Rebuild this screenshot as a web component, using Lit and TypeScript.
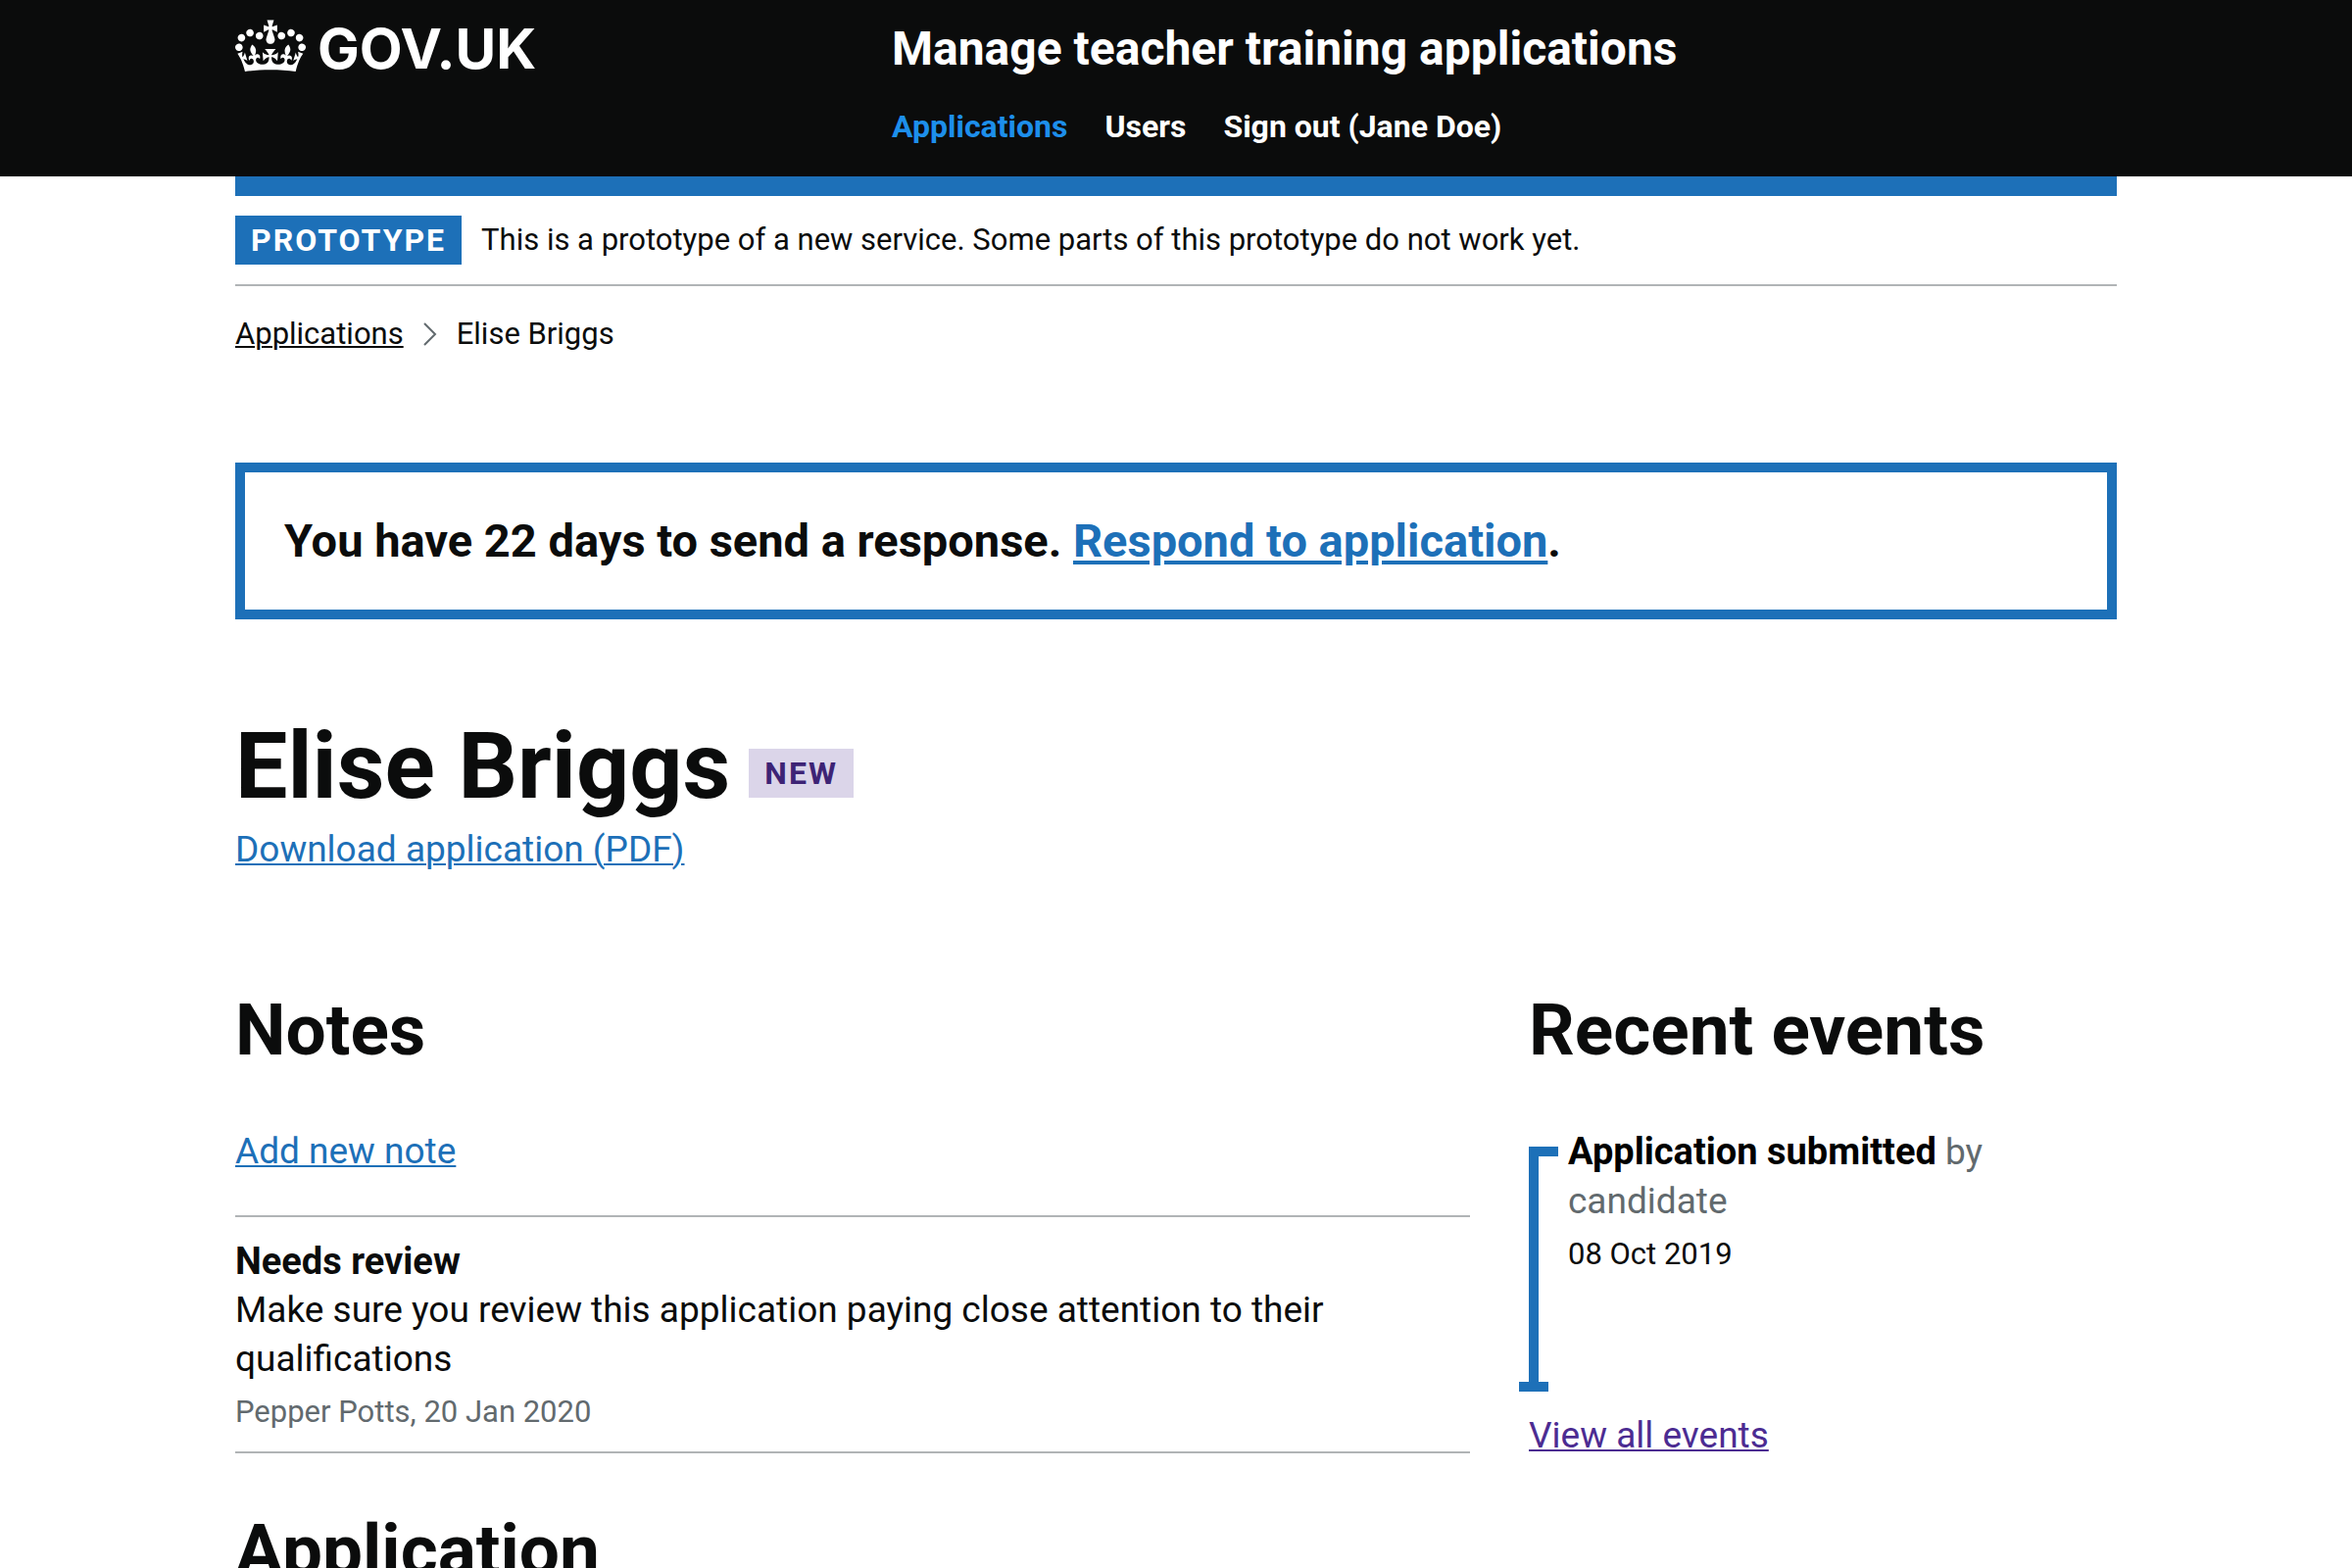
import { LitElement, html, css } from "lit";
import { customElement, property } from "lit/decorators.js";

interface NavItem {
  label: string;
  href: string;
  current?: boolean;
}

interface TimelineEvent {
  title: string;
  actor: string;
  date: string;
}

interface Note {
  title: string;
  body: string;
  author: string;
  date: string;
}

/* Black service header with the crown logotype and primary navigation. */
@customElement("service-header")
export class ServiceHeader extends LitElement {
  @property({ attribute: false }) items: NavItem[] = [];

  static styles = css`
    :host {
      display: block;
      background: #0b0c0c;
      color: #ffffff;
    }
    .inner {
      display: grid;
      grid-template-columns: 64fr 125fr;
      column-gap: 30px;
      max-width: 1920px;
      width: calc(100% - 120px);
      margin: 0 auto;
      padding: 20px 0 31px;
    }
    a {
      color: #ffffff;
      text-decoration: none;
      font-weight: 700;
    }
    .logo {
      display: inline-flex;
      align-items: flex-start;
      gap: 12px;
      font-family: Inter, sans-serif;
      font-size: 57px;
      line-height: 60px;
    }
    .crown {
      width: 72px;
      height: 54px;
    }
    .content {
      display: flex;
      flex-direction: column;
      align-items: flex-start;
      gap: 29px;
    }
    .service {
      font-size: 48px;
      line-height: 60px;
    }
    .nav {
      display: flex;
      flex-wrap: wrap;
      gap: 38px;
      margin: 0;
      padding: 0;
      list-style: none;
      font-size: 32px;
      line-height: 40px;
    }
    .current {
      color: #1d8feb;
    }
  `;

  render() {
    return html`
      <header class="inner">
        <div>
          <a class="logo" href="#">
            <svg class="crown" viewBox="0 0 132 97" aria-hidden="true">
              <path
                fill="currentColor"
                fill-rule="evenodd"
                d="M25 30.2c3.5 1.5 7.7-.2 9.1-3.7 1.5-3.6-.2-7.8-3.9-9.2-3.6-1.4-7.6.3-9.1 3.9-1.4 3.5.3 7.5 3.9 9zM9 39.5c3.6 1.5 7.8-.2 9.2-3.7 1.5-3.6-.2-7.8-3.9-9.1-3.6-1.5-7.6.2-9.1 3.8-1.4 3.5.3 7.5 3.8 9zM4.4 57.2c3.5 1.5 7.7-.2 9.1-3.8 1.5-3.6-.2-7.7-3.9-9.1-3.5-1.5-7.6.3-9.1 3.8-1.4 3.5.3 7.6 3.9 9.1zm38.3-21.4c3.5 1.5 7.7-.2 9.1-3.8 1.5-3.6-.2-7.7-3.9-9.1-3.6-1.5-7.6.3-9.1 3.8-1.3 3.6.4 7.7 3.9 9.1zm64.4-5.6c-3.6 1.5-7.8-.2-9.1-3.7-1.5-3.6.2-7.8 3.8-9.2 3.6-1.4 7.7.3 9.2 3.9 1.3 3.5-.4 7.5-3.9 9zm15.9 9.3c-3.6 1.5-7.7-.2-9.1-3.7-1.5-3.6.2-7.8 3.7-9.1 3.6-1.5 7.7.2 9.2 3.8 1.5 3.5-.3 7.5-3.8 9zm4.7 17.7c-3.6 1.5-7.8-.2-9.2-3.8-1.5-3.6.2-7.7 3.9-9.1 3.6-1.5 7.7.3 9.2 3.8 1.3 3.5-.4 7.6-3.9 9.1zM89.3 35.8c-3.6 1.5-7.8-.2-9.2-3.8-1.4-3.6.2-7.7 3.9-9.1 3.6-1.5 7.7.3 9.2 3.8 1.4 3.6-.3 7.7-3.9 9.1zM69.7 17.7l8.9 4.7V9.3l-8.9 2.8c-.2-.3-.5-.6-.9-.9L72.4 0H59.6l3.5 11.2c-.3.3-.6.5-.9.9l-8.8-2.8v13.1l8.8-4.7c.3.3.6.7.9.9l-5 15.4v.1c-.2.8-.4 1.6-.4 2.4 0 4.1 3.1 7.5 7 8.1h.2c.3 0 .7.1 1 .1.4 0 .7 0 1-.1h.2c4-.6 7.1-4.1 7.1-8.1 0-.8-.1-1.7-.4-2.4V34l-5.1-15.4c.4-.2.7-.6 1-.9zM66 92.8c16.9 0 32.8 1.1 47.1 3.2 4-16.9 8.9-26.7 14-33.5l-9.6-3.4c1 4.9 1.1 7.2 0 10.2-1.5-1.4-3-4.3-4.2-8.7L108.6 76c2.8-2 5-3.2 7.5-3.3-4.4 9.4-10 11.9-13.6 11.2-4.3-.8-6.3-4.6-5.6-7.9 1-4.7 5.7-5.9 8-.5 4.3-8.7-3-11.4-7.6-8.8 7.1-7.2 7.9-13.5 2.1-21.1-8 6.1-8.1 12.3-4.5 20.8-4.7-5.4-12.1-2.5-9.5 6.2 3.4-5.2 7.9-2 7.2 3.1-.6 4.3-6.4 7.8-13.5 7.2-10.3-.9-10.9-8-11.2-13.8 2.5-.5 7.1 1.8 11 7.3L80.2 60c-4.1 4.4-8 5.3-12.3 5.4 1.4-4.4 8-11.6 8-11.6H55.5s6.4 7.2 7.9 11.6c-4.2-.1-8-1-12.3-5.4l1.4 16.4c3.9-5.5 8.5-7.7 10.9-7.3-.3 5.8-.9 12.8-11.1 13.8-7.2.6-12.9-2.9-13.5-7.2-.7-5 3.8-8.3 7.1-3.1 2.7-8.7-4.6-11.6-9.4-6.2 3.7-8.5 3.6-14.7-4.6-20.8-5.8 7.6-5 13.9 2.2 21.1-4.7-2.6-11.9.1-7.7 8.8 2.3-5.5 7.1-4.2 8.1.5.7 3.3-1.3 7.1-5.7 7.9-3.5.7-9-1.8-13.5-11.2 2.5.1 4.7 1.3 7.5 3.3l-4.7-15.4c-1.2 4.4-2.7 7.2-4.3 8.7-1.1-3-.9-5.3 0-10.2l-9.5 3.4c5 6.9 9.9 16.7 14 33.5 14.8-2.1 30.8-3.2 47.7-3.2z"
              ></path>
            </svg>
            <span>GOV.UK</span>
          </a>
        </div>
        <div class="content">
          <a class="service" href="#">Manage teacher training applications</a>
          <nav>
            <ul class="nav">
              ${this.items.map(
                (item) => html`<li>
                  <a class=${item.current ? "current" : "item"} href=${item.href}>${item.label}</a>
                </li>`
              )}
            </ul>
          </nav>
        </div>
      </header>
    `;
  }
}

/* Vertical list of events, each with a bracket-shaped marker. */
@customElement("event-timeline")
export class EventTimeline extends LitElement {
  @property({ attribute: false }) events: TimelineEvent[] = [];

  static styles = css`
    :host {
      display: block;
    }
    .list {
      margin: 0;
      padding: 0;
      list-style: none;
    }
    .event {
      display: flex;
      gap: 10px;
    }
    .marker {
      flex: none;
      display: flex;
      flex-direction: column;
      justify-content: space-between;
      width: 30px;
      margin-top: 20px;
      background: linear-gradient(#1d70b8, #1d70b8) left / 10px 100% no-repeat;
    }
    .marker::before,
    .marker::after {
      content: "";
      height: 10px;
      background: #1d70b8;
    }
    .marker::after {
      width: 30px;
      margin-left: -10px;
    }
    .details {
      padding-bottom: 120px;
    }
    .title,
    .date {
      margin: 0;
      font-weight: 400;
    }
    .title {
      font-size: 37px;
      line-height: 50px;
      color: #626a6e;
    }
    .title strong {
      font-size: 38px;
      color: #000000;
    }
    .date {
      margin-top: 9px;
      font-size: 31px;
      line-height: 40px;
    }
  `;

  render() {
    return html`
      <ol class="list">
        ${this.events.map(
          (event) => html`<li class="event">
            <span class="marker" aria-hidden="true"></span>
            <div class="details">
              <h3 class="title"><strong>${event.title}</strong> by ${event.actor}</h3>
              <p class="date"><time>${event.date}</time></p>
            </div>
          </li>`
        )}
      </ol>
    `;
  }
}

@customElement("app-root")
export class AppRoot extends LitElement {
  private navItems: NavItem[] = [
    { label: "Applications", href: "#applications", current: true },
    { label: "Users", href: "#users" },
    { label: "Sign out (Jane Doe)", href: "#sign-out" },
  ];

  private events: TimelineEvent[] = [
    { title: "Application submitted", actor: "candidate", date: "08 Oct 2019" },
  ];

  private notes: Note[] = [
    {
      title: "Needs review",
      body: "Make sure you review this application paying close attention to their qualifications",
      author: "Pepper Potts",
      date: "20 Jan 2020",
    },
  ];

  static styles = css`
    :host {
      display: block;
      background: #ffffff;
      color: #0b0c0c;
      font-family: Roboto, "Liberation Sans", sans-serif;
      font-size: 37px;
      line-height: 50px;
    }
    .container {
      max-width: 1920px;
      width: calc(100% - 120px);
      margin: 0 auto;
    }
    a {
      color: #1d70b8;
      text-decoration: underline;
      text-decoration-thickness: 2px;
      text-underline-offset: 2px;
    }
    h1,
    h2,
    h3,
    p {
      margin: 0;
    }
    .phase {
      display: flex;
      align-items: center;
      gap: 20px;
      border-top: 20px solid #1d70b8;
      border-bottom: 2px solid #b1b4b6;
      padding: 20px 0;
      font-size: 31px;
    }
    .tag {
      padding: 0 16px;
      font-size: 32px;
      font-weight: 700;
      line-height: 50px;
      letter-spacing: 2px;
      text-transform: uppercase;
    }
    .tag-phase {
      background: #1d70b8;
      color: #ffffff;
    }
    .tag-new {
      background: #dbd5e9;
      color: #3d2375;
    }
    .crumbs {
      display: flex;
      align-items: center;
      margin: 29px 0 0;
      padding: 0;
      list-style: none;
      font-size: 31px;
      line-height: 40px;
    }
    .crumbs li {
      display: flex;
      align-items: center;
    }
    .crumbs a {
      color: #0b0c0c;
    }
    .chevron {
      width: 14px;
      height: 24px;
      margin: 0 20px;
    }
    .banner {
      margin-top: 111px;
      border: 10px solid #1d70b8;
      padding: 40px;
      font-size: 47px;
      font-weight: 700;
      line-height: 60px;
    }
    .banner a {
      text-decoration-thickness: 4px;
      text-underline-offset: 4px;
    }
    .heading {
      display: flex;
      align-items: baseline;
      gap: 19px;
      margin-top: 98px;
    }
    .name {
      font-size: 95px;
      line-height: 104px;
    }
    .heading .tag {
      align-self: flex-end;
      margin-bottom: 20px;
    }
    .download {
      margin-top: 8px;
    }
    .columns {
      display: grid;
      grid-template-columns: 21fr 10fr;
      column-gap: 60px;
      margin-top: 119px;
    }
    h2 {
      font-size: 73px;
      line-height: 80px;
    }
    .add,
    .timeline {
      margin-top: 59px;
    }
    .notes {
      margin: 40px 0 59px;
      border-top: 2px solid #b1b4b6;
    }
    .note {
      border-bottom: 2px solid #b1b4b6;
      padding: 20px 0;
    }
    .note h3 {
      font-size: 38px;
    }
    .meta {
      margin-top: 9px;
      font-size: 31px;
      line-height: 40px;
      color: #626a6e;
    }
    .all {
      margin-top: 20px;
    }
    .all a {
      color: #4c2c92;
    }
  `;

  render() {
    return html`
      <service-header .items=${this.navItems}></service-header>
      <div class="container">
        <div class="phase">
          <strong class="tag tag-phase">Prototype</strong>
          <span>This is a prototype of a new service. Some parts of this prototype do not work yet.</span>
        </div>
        <nav aria-label="Breadcrumb">
          <ol class="crumbs">
            <li><a href="#applications">Applications</a></li>
            <li>
              <svg class="chevron" viewBox="0 0 14 24" aria-hidden="true">
                <path d="M1 1 L12 12 L1 23" fill="none" stroke="#626a6e" stroke-width="2"></path>
              </svg>
              <span>Elise Briggs</span>
            </li>
          </ol>
        </nav>
        <main>
          <p class="banner">
            You have 22 days to send a response. <a href="#respond">Respond to application</a>.
          </p>
          <div class="heading">
            <h1 class="name">Elise Briggs</h1>
            <strong class="tag tag-new">New</strong>
          </div>
          <p class="download"><a href="#pdf">Download application (PDF)</a></p>
          <div class="columns">
            <div>
              <section>
                <h2>Notes</h2>
                <p class="add"><a href="#add-note">Add new note</a></p>
                <div class="notes">
                  ${this.notes.map(
                    (note) => html`<article class="note">
                      <h3>${note.title}</h3>
                      <p>${note.body}</p>
                      <p class="meta">${note.author}, ${note.date}</p>
                    </article>`
                  )}
                </div>
              </section>
              <section>
                <h2>Application</h2>
              </section>
            </div>
            <aside>
              <h2>Recent events</h2>
              <event-timeline class="timeline" .events=${this.events}></event-timeline>
              <p class="all"><a href="#events">View all events</a></p>
            </aside>
          </div>
        </main>
      </div>
    `;
  }
}
